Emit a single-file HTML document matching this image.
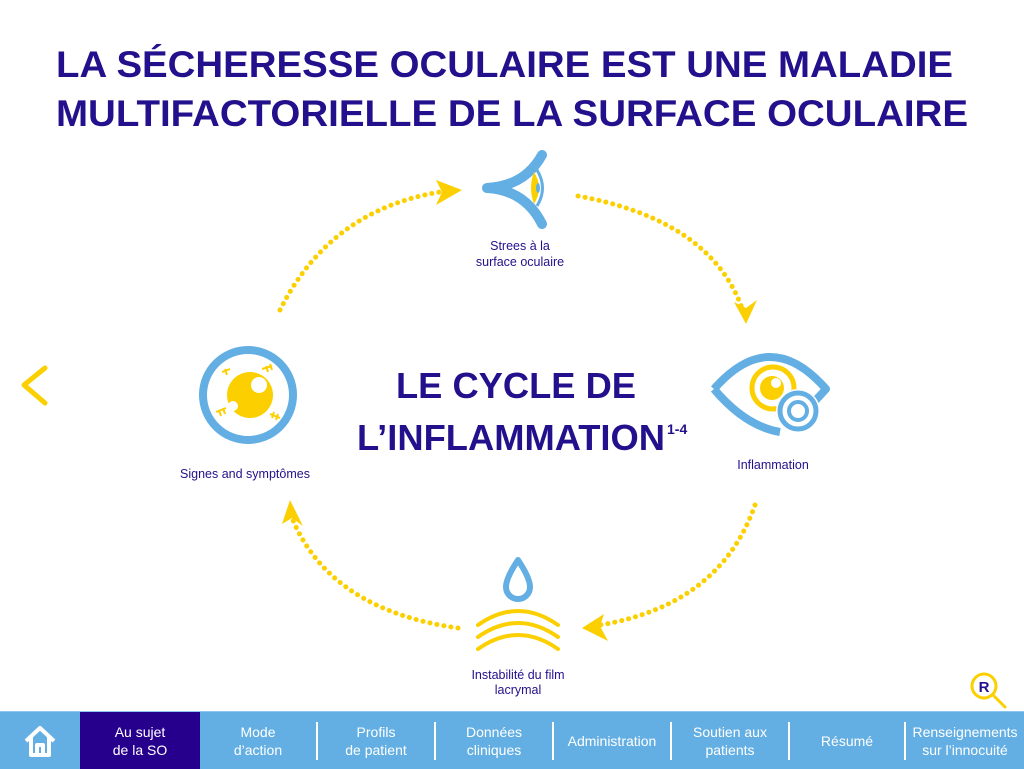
<!DOCTYPE html>
<html><head><meta charset="utf-8"><style>
body{margin:0;width:1024px;height:768px;overflow:hidden;background:#fff;font-family:"Liberation Sans",sans-serif}
.nav{position:absolute;left:0;top:711px;width:1024px;height:57px;background:#63afe3;border-top:1px solid #8cc6ee}
.it{position:absolute;top:0;height:57px;display:flex;align-items:center;justify-content:center;text-align:center;color:#fff;font-size:14px;line-height:18px}
.sep{position:absolute;top:10px;width:2px;height:38px;background:#fff}
</style></head><body>
<svg width="1024" height="711" style="position:absolute;left:0;top:0">
<g fill="#23108c" font-weight="bold" font-family="Liberation Sans, sans-serif">
<text x="56" y="77" font-size="37" textLength="897" lengthAdjust="spacingAndGlyphs">LA SÉCHERESSE OCULAIRE EST UNE MALADIE</text>
<text x="56" y="126" font-size="37" textLength="912" lengthAdjust="spacingAndGlyphs">MULTIFACTORIELLE DE LA SURFACE OCULAIRE</text>
<text x="396" y="398" font-size="36" textLength="240" lengthAdjust="spacingAndGlyphs">LE CYCLE DE</text>
<text x="357" y="450" font-size="36" textLength="308" lengthAdjust="spacingAndGlyphs">L’INFLAMMATION</text>
<text x="667" y="434" font-size="14">1-4</text>
</g>
<g fill="#23108c" font-size="12.5" text-anchor="middle">
<text x="520" y="250">Strees à la</text><text x="520" y="266">surface oculaire</text>
<text x="773" y="469">Inflammation</text>
<text x="245" y="478">Signes and symptômes</text>
<text x="518" y="679">Instabilité du film</text><text x="518" y="694">lacrymal</text>
</g>
<g fill="none" stroke="#fcd000" stroke-width="5" stroke-linecap="round" stroke-dasharray="0.1 7">
<path d="M280 310 Q330 210 440 192"/>
<path d="M578 196 Q710 220 742 308"/>
<path d="M755 505 Q720 605 600 625"/>
<path d="M458 628 Q330 610 292 518"/>
</g>
<g fill="#fcd000">
<path d="M462 190 L436 180 L442 192 L436 205Z"/>
<path d="M746 324 L734 302 L746 308 L757 300Z"/>
<path d="M582 628 L604 614 L600 626 L608 641Z"/>
<path d="M290 500 L282 524 L292 518 L303 526Z"/>
<path d="M45 368 L24 385 L45 403" fill="none" stroke="#fcd000" stroke-width="5" stroke-linecap="round" stroke-linejoin="round"/>
</g>
<path d="M487 188 Q525 186 542 155 M487 188 Q525 190 542 224" fill="none" stroke="#63afe3" stroke-width="10" stroke-linecap="round"/>
<path d="M537 170 Q548 188 537 206" fill="none" stroke="#63afe3" stroke-width="3"/>
<path d="M534 172 Q544 188 534 204 Q528 188 534 172Z" fill="#fcd000"/>
<ellipse cx="538" cy="188" rx="2" ry="5" fill="#63afe3"/>
<circle cx="248" cy="395" r="45" fill="none" stroke="#63afe3" stroke-width="8"/>
<circle cx="250" cy="395" r="23" fill="#fcd000"/>
<circle cx="259" cy="385" r="8" fill="#fff"/>
<circle cx="233" cy="406" r="5" fill="#fff"/>
<g stroke="#fcd000" stroke-width="2" fill="none">
<path d="M222 372 l8 -3 M225 369 l2 6"/><path d="M262 369 l10 -3 M266 366 l2 6 M270 364 l2 6"/>
<path d="M216 412 l10 -4 M219 410 l2 6 M223 408 l2 6"/><path d="M270 414 l10 4 M274 412 l-2 6 M278 414 l-2 6"/>
</g>
<path d="M714 389 Q770 325 826 389 Q800 418 790 422 M714 389 Q745 426 780 432" fill="none" stroke="#63afe3" stroke-width="8" stroke-linejoin="round"/>
<circle cx="773" cy="388" r="21" fill="none" stroke="#fcd000" stroke-width="5"/>
<circle cx="772" cy="388" r="12" fill="#fcd000"/>
<circle cx="776" cy="383" r="5" fill="#fff"/>
<circle cx="798" cy="411" r="22" fill="#fff"/>
<circle cx="798" cy="411" r="18" fill="none" stroke="#63afe3" stroke-width="5"/>
<circle cx="798" cy="411" r="9" fill="none" stroke="#63afe3" stroke-width="4"/>
<path d="M518 560 Q530 578 530 587 A12 12 0 0 1 506 587 Q506 578 518 560Z" fill="none" stroke="#63afe3" stroke-width="6" stroke-linejoin="round"/>
<g fill="none" stroke="#fcd000" stroke-width="4" stroke-linecap="round">
<path d="M478 625 Q518 597 558 625"/><path d="M478 637 Q518 609 558 637"/><path d="M478 649 Q518 621 558 649"/>
</g>
<circle cx="984" cy="686" r="12" fill="#fff" stroke="#fcd000" stroke-width="3"/>
<path d="M993 695 L1005 707" stroke="#fcd000" stroke-width="3" stroke-linecap="round"/>
<text x="984" y="692" font-size="15" font-weight="bold" fill="#23108c" text-anchor="middle">R</text>
</svg>
<div class="nav">
<svg style="position:absolute;left:22px;top:12px" width="36" height="34"><path d="M4 17 L18 4 L32 17 M9 13 V31 H27 V13 M15 31 V21 H21 V31" fill="none" stroke="#fff" stroke-width="4" stroke-linejoin="round"/></svg>
<div class="it" style="left:80px;width:120px;background:#26008c">Au sujet<br>de la SO</div>
<div class="it" style="left:200px;width:116px">Mode<br>d’action</div>
<div class="sep" style="left:316px"></div>
<div class="it" style="left:318px;width:116px">Profils<br>de patient</div>
<div class="sep" style="left:434px"></div>
<div class="it" style="left:436px;width:116px">Données<br>cliniques</div>
<div class="sep" style="left:552px"></div>
<div class="it" style="left:554px;width:116px">Administration</div>
<div class="sep" style="left:670px"></div>
<div class="it" style="left:672px;width:116px">Soutien aux<br>patients</div>
<div class="sep" style="left:788px"></div>
<div class="it" style="left:790px;width:114px">Résumé</div>
<div class="sep" style="left:904px"></div>
<div class="it" style="left:906px;width:118px">Renseignements<br>sur l’innocuité</div>
</div>
</body></html>
